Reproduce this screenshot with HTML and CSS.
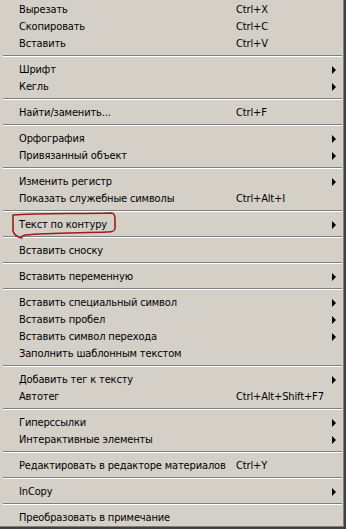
FILE: index.html
```html
<!DOCTYPE html>
<html lang="ru">
<head>
  <meta charset="UTF-8" />
  <title>Контекстное меню</title>
  <meta name="viewport" content="width=device-width, initial-scale=1.0" />
  <link rel="stylesheet" href="styles.css">
</head>
<body>
  <div class="menu">
    <div class="item"><span class="label">Вырезать</span><span class="key">Ctrl+X</span></div>
    <div class="item"><span class="label">Скопировать</span><span class="key">Ctrl+C</span></div>
    <div class="item"><span class="label">Вставить</span><span class="key">Ctrl+V</span></div>
    <div class="sep"></div>
    <div class="item sub"><span class="label">Шрифт</span><span class="key"></span><span class="arrow"></span></div>
    <div class="item sub"><span class="label">Кегль</span><span class="key"></span><span class="arrow"></span></div>
    <div class="sep"></div>
    <div class="item"><span class="label">Найти/заменить...</span><span class="key">Ctrl+F</span></div>
    <div class="sep"></div>
    <div class="item sub"><span class="label">Орфография</span><span class="key"></span><span class="arrow"></span></div>
    <div class="item sub"><span class="label">Привязанный объект</span><span class="key"></span><span class="arrow"></span></div>
    <div class="sep"></div>
    <div class="item sub"><span class="label">Изменить регистр</span><span class="key"></span><span class="arrow"></span></div>
    <div class="item"><span class="label">Показать служебные символы</span><span class="key">Ctrl+Alt+I</span></div>
    <div class="sep"></div>
    <div class="item sub marked">
      <span class="label">Текст по контуру</span><span class="key"></span><span class="arrow"></span>
      <!-- пометка от руки -->
      <svg class="scribble" width="112" height="30" viewBox="0 0 112 30">
        <path d="M6 4 C30 2 70 3 104 2 C107 2 108 4 108 8 L108 17 C108 20 106 21 100 21 C70 22 40 22 18 24 C14 25 14 27 15 27 C10 26 7 24 6 20 L6 5" fill="none" stroke="#9e1b1b" stroke-width="1.6" stroke-linecap="round" stroke-linejoin="round"/>
      </svg>
    </div>
    <div class="sep"></div>
    <div class="item"><span class="label">Вставить сноску</span></div>
    <div class="sep"></div>
    <div class="item sub"><span class="label">Вставить переменную</span><span class="key"></span><span class="arrow"></span></div>
    <div class="sep"></div>
    <div class="item sub"><span class="label">Вставить специальный символ</span><span class="key"></span><span class="arrow"></span></div>
    <div class="item sub"><span class="label">Вставить пробел</span><span class="key"></span><span class="arrow"></span></div>
    <div class="item sub"><span class="label">Вставить символ перехода</span><span class="key"></span><span class="arrow"></span></div>
    <div class="item"><span class="label">Заполнить шаблонным текстом</span></div>
    <div class="sep"></div>
    <div class="item sub"><span class="label">Добавить тег к тексту</span><span class="key"></span><span class="arrow"></span></div>
    <div class="item"><span class="label">Автотег</span><span class="key">Ctrl+Alt+Shift+F7</span></div>
    <div class="sep"></div>
    <div class="item sub"><span class="label">Гиперссылки</span><span class="key"></span><span class="arrow"></span></div>
    <div class="item sub"><span class="label">Интерактивные элементы</span><span class="key"></span><span class="arrow"></span></div>
    <div class="sep"></div>
    <div class="item"><span class="label">Редактировать в редакторе материалов</span><span class="key">Ctrl+Y</span></div>
    <div class="sep"></div>
    <div class="item sub"><span class="label">InCopy</span><span class="key"></span><span class="arrow"></span></div>
    <div class="sep"></div>
    <div class="item"><span class="label">Преобразовать в примечание</span></div>
  </div>
</body>
</html>
```

FILE: styles.css
```css
* {
  margin: 0;
  padding: 0;
  box-sizing: border-box;
}
body {
  background: #d4d0c8;
  font-family: 'DejaVu Sans Condensed', 'Liberation Sans', sans-serif;
  font-size: 11px;
  letter-spacing: -0.15px;
  color: #000;
}
.menu {
  width: 346px;
  height: 529px;
  background: #d4d0c8;
  padding-top: 1px;
  box-shadow: inset -2px -2px 0 #404040, inset -3px -3px 0 #808080;
  overflow: hidden;
}
.item {
  height: 17px;
  display: flex;
  align-items: center;
  padding-left: 19px;
  padding-right: 10px;
  white-space: nowrap;
  position: relative;
}
.label {
  width: 217px;
  flex: none;
}
.key {
  flex: 1;
}
.arrow {
  width: 0;
  height: 0;
  border-top: 4px solid transparent;
  border-bottom: 4px solid transparent;
  border-left: 4px solid #000;
}
.sep {
  height: 9px;
  padding-top: 3px;
  margin: 0 4px 0 3px;
}
.sep::before {
  content: '';
  display: block;
  height: 1px;
  background: #808080;
  border-bottom: 1px solid #fff;
  box-sizing: content-box;
}
.scribble {
  position: absolute;
  left: 7px;
  top: -5px;
  pointer-events: none;
}
```
